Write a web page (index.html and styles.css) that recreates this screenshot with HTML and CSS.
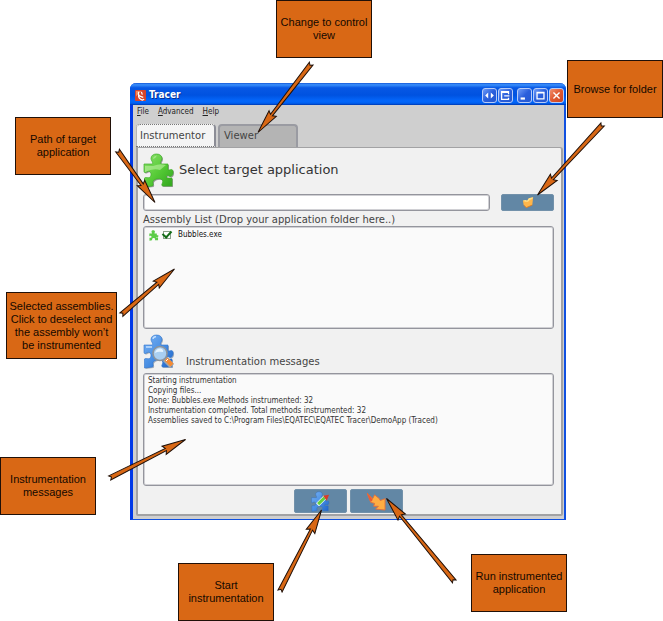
FILE: index.html
```html
<!DOCTYPE html>
<html lang="en">
<head>
<meta charset="utf-8">
<title>Tracer</title>
<link rel="stylesheet" href="styles.css">
</head>
<body>
<svg class="defs" aria-hidden="true">
  <defs>
    <linearGradient id="green" x1="0" y1="0" x2="1" y2="1"><stop offset="0" stop-color="#8fe070"/><stop offset=".5" stop-color="#58cc38"/><stop offset="1" stop-color="#2fa41c"/></linearGradient>
    <linearGradient id="blue" x1="0" y1="0" x2="1" y2="1"><stop offset="0" stop-color="#79b2f4"/><stop offset=".5" stop-color="#4a90e4"/><stop offset="1" stop-color="#1c62c8"/></linearGradient>
    <path id="piece" d="M1 11 H9 C11 10.500 8 7.500 8 5.500 C8 2.500 10.500 1 13.500 1 C17 1 19 3 19 5.500 C19 7.500 16.500 9.500 18 11 L25 11 V16 C25 18.500 28 15.500 29.500 17 C31 19 29.500 24 27 23.500 C25.500 23 24 21.500 23.500 23 V25 H29 V33 H19.500 C17.500 32 20.500 29.500 19.500 27.500 C18 24.500 11 25.500 10 28.500 C9.500 30.500 11 31.500 9.500 33 L1.500 34 V25 C2.500 23.500 6 26 7.500 23.500 C9 20.500 7 17.500 4.500 18.500 C2.500 19.500 1 20.500 1 18 Z"/>
  </defs>
</svg>
<div class="stage">
  <main class="window">
    <header class="titlebar">
      <svg class="app-icon" viewBox="0 0 12 12" aria-hidden="true"><rect width="12" height="12" rx="1" fill="#d8442a"/><path d="M1 1H7L1 7Z" fill="#f28a5c"/><path d="M4 2Q3 6 6 7L9 8M4 5Q3 9 8 11L10 10M7 2L8 5" fill="none" stroke="#fff" stroke-width="1.300"/></svg>
      <h1>Tracer</h1>
      <div class="controls">
        <button aria-label="Switch"><svg viewBox="0 0 15 15"><path d="M6 4V11L2.500 7.500ZM9 4V11L12.500 7.500Z" fill="#fff"/></svg></button>
        <button aria-label="Detach"><svg viewBox="0 0 15 15"><path d="M11 6V3H3V12H11V10M3 4H11M6 8H12" fill="none" stroke="#fff" stroke-width="1.500"/></svg></button>
      </div>
      <div class="controls sys">
        <button aria-label="Minimize"><svg viewBox="0 0 15 15"><path d="M3 11H8" stroke="#fff" stroke-width="2.500"/></svg></button>
        <button aria-label="Maximize"><svg viewBox="0 0 15 15"><path d="M3.500 4H11.500V11.500H3.500ZM3 4.500H12" fill="none" stroke="#fff" stroke-width="1.500"/></svg></button>
        <button class="close" aria-label="Close"><svg viewBox="0 0 15 15"><path d="M4 4L11 11M11 4L4 11" stroke="#fff" stroke-width="1.600"/></svg></button>
      </div>
    </header>
    <nav class="menu"><a href="#"><u>F</u>ile</a><a href="#"><u>A</u>dvanced</a><a href="#"><u>H</u>elp</a></nav>
    <div class="tabs" role="tablist">
      <button class="tab active" role="tab" aria-selected="true">Instrumentor</button>
      <button class="tab" role="tab" aria-selected="false">Viewer</button>
    </div>
    <section class="panel">
      <div class="head">
        <svg class="piece" viewBox="0 0 32 35" aria-hidden="true"><use href="#piece" x="1" y="1" fill="#9a9a9a"/><use href="#piece" fill="url(#green)" stroke="#3fae2a" stroke-width=".7"/><path d="M10 6Q10 3 14 2.500Q13 5 10 6M2 13H10Q17 10 23 12L17 17Q10 15 2 19Z" fill="#c4f4ac" opacity=".55"/></svg>
        <h2><label for="path">Select target application</label></h2>
      </div>
      <div class="path-row">
        <input id="path" type="text">
        <button class="action" aria-label="Browse for folder"><svg viewBox="0 0 14 12"><path d="M1 4L4 3 6 4 8 1 13 0 12 9 5 12 2 9Z" fill="#ffb64a"/><path d="M1 4L4 3 6 4 8 1 13 0 12 2 9 3 7 5 4 5Z" fill="#ffe08a"/><path d="M2 9L5 12 12 9" fill="none" stroke="#d87820"/></svg></button>
      </div>
      <h3 class="list-title">Assembly List (Drop your application folder here..)</h3>
      <div class="box list">
        <div class="item">
          <svg viewBox="0 0 32 35" aria-hidden="true"><use href="#piece" fill="#5ccc48"/></svg>
          <input id="bubbles" type="checkbox" checked>
          <label for="bubbles">Bubbles.exe</label>
        </div>
      </div>
      <div class="head messages-head">
        <svg class="piece" viewBox="0 0 32 35" aria-hidden="true"><use href="#piece" x="1" y="1" fill="#a8b0ba"/><use href="#piece" fill="url(#blue)" stroke="#2f74cc" stroke-width=".6"/><path d="M10 5Q10 3 13 2.500M3 13H9" fill="none" stroke="#c4e0ff" stroke-width="1.300"/><path d="M22 25L29 32" stroke="#a6a6a6" stroke-width="6"/><path d="M23 25L29 31" stroke="#f58a32" stroke-width="4"/><path d="M23 27L25 25" stroke="#fff" stroke-width="1"/><circle cx="17" cy="19.500" r="7" fill="#a9cff2" stroke="#8d949c" stroke-width="1.600"/><path d="M12 19Q13 14 18 14.500Q21 16 20 18Q15 17 12 19" fill="#e6f4ff"/></svg>
        <h3>Instrumentation messages</h3>
      </div>
      <div class="box log">
        <p>Starting instrumentation</p>
        <p>Copying files...</p>
        <p>Done: Bubbles.exe Methods instrumented: 32</p>
        <p>Instrumentation completed. Total methods instrumented: 32</p>
        <p>Assemblies saved to C:\Program Files\EQATEC\EQATEC Tracer\DemoApp (Traced)</p>
      </div>
      <div class="actions">
        <button class="action" aria-label="Start instrumentation"><svg viewBox="0 0 32 35"><use href="#piece" fill="url(#blue)" stroke="#2869c0" stroke-width=".6"/><path d="M11 23L24 10" stroke="#fff" stroke-width="7"/><path d="M12 22L23 11" stroke="#62d040" stroke-width="5"/><path d="M23 9L28 8 26 13Z" fill="#d83c26" stroke="#d83c26" stroke-width="3"/></svg></button>
        <button class="action" aria-label="Run instrumented application"><svg viewBox="0 0 20 20"><path d="M0 1L6 7 8 3 13 7 14 9 19 7V19L9 18 12 15 7 15 8 12 4 11Z" fill="#ffad42" stroke="#e0703c" stroke-width="1"/><path d="M0 1L6 8 5 10 3 9Z" fill="#e85a38"/></svg></button>
      </div>
    </section>
  </main>

  <aside class="note note-view">Change to control view</aside>
  <aside class="note note-path">Path of target application</aside>
  <aside class="note note-browse">Browse for folder</aside>
  <aside class="note note-selected">Selected assemblies. Click to deselect and the assembly won’t be instrumented</aside>
  <aside class="note note-messages">Instrumentation messages</aside>
  <aside class="note note-start">Start instrumentation</aside>
  <aside class="note note-run">Run instrumented application</aside>

  <svg class="arrows" width="663" height="621" viewBox="0 0 663 621" aria-hidden="true">
    <path transform="translate(258 132.500) rotate(-52.300)" d="M0 0L24-4.600 22-1.200 87-2.300 85 0 87 2.300 22 1.200 24 4.600Z"/>
    <path transform="translate(155 202.500) rotate(-125.800)" d="M0 0L24-4.600 22-1.400 64-2.300 62 0 64 2.300 22 1.400 24 4.600Z"/>
    <path transform="translate(537.500 195) rotate(-47.300)" d="M0 0L24-4.600 22-1.200 96-2.300 94 0 96 2.300 22 1.200 24 4.600Z"/>
    <path transform="translate(174.500 269) rotate(139.400)" d="M0 0L24-4.600 22-1.400 70-2.300 68 0 70 2.300 22 1.400 24 4.600Z"/>
    <path transform="translate(185.500 439.500) rotate(153.100)" d="M0 0L24-4.600 22-1.200 85-2.300 83 0 85 2.300 22 1.200 24 4.600Z"/>
    <path transform="translate(321.500 510) rotate(117.100)" d="M0 0L24-4.800 22-1.200 91-2.300 89 0 91 2.300 22 1.200 24 4.800Z"/>
    <path transform="translate(386.500 498.500) rotate(50.700)" d="M0 0L24-4.800 22-1.200 107-2.300 105 0 107 2.300 22 1.200 24 4.800Z"/>
  </svg>
</div>
</body>
</html>
```
FILE: styles.css
```css
* { box-sizing: border-box; }
body { margin: 0; background: #fff; }
h1, h2, h3, p { margin: 0; font-weight: normal; }
h3 { font-size: 10px; line-height: 12px; }
button { margin: 0; padding: 0; border: 0; font: inherit; color: inherit; }
.defs { position: absolute; width: 0; height: 0; }

.stage {
  position: relative;
  min-height: 621px;
  padding: 83px 97px 0 130px;
  font-family: "DejaVu Sans", sans-serif;
  font-size: 10px;
  color: #444;
}

.window {
  background: #cfcfcf;
  border: solid #1050e0;
  border-width: 0 2px 1px 3px;
  border-radius: 6px 6px 0 0;
  border-left-color: #0038e8;
  padding-bottom: 3px;
}
.titlebar {
  display: flex;
  align-items: center;
  height: 22px;
  margin: 0 -2px 0 -3px;
  padding: 2px 2px 0 5px;
  border-radius: 6px 6px 0 0;
  background: linear-gradient(#1458d8, #3a90fc 8%, #0858e4 22%, #0052e0 55%, #0468fc 82%, #0060f0 92%, #0038b0);
}
.app-icon { width: 11px; height: 11px; margin-right: 3px; }
.titlebar h1 {
  flex: 1;
  font: bold 10px/16px "DejaVu Sans Condensed", "DejaVu Sans", sans-serif;
  color: #fff;
  text-shadow: 1px 1px #083090;
}
.controls { display: flex; gap: 1px; }
.controls.sys { margin-left: 4px; }
.controls button {
  width: 15px;
  height: 15px;
  border: 1px solid #b8ccf8;
  border-radius: 3px;
  background: linear-gradient(135deg, #6f9cf8, #2a5fdc 50%, #2458d0);
}
.controls svg { display: block; width: 13px; height: 13px; }
.controls .close { background: linear-gradient(135deg, #f09070, #e05830 50%, #cc4420); }

.menu {
  display: flex;
  gap: 9px;
  padding: 1px 4px;
  font: 8px/12px "DejaVu Sans Condensed", "DejaVu Sans", sans-serif;
}
.menu a { color: #222; text-decoration: none; }

.tabs { display: flex; gap: 2px; padding: 5px 3px 0; }
.tab {
  width: 80px;
  height: 23px;
  padding: 0 4px 2px;
  border: 2px solid #9a9ba2;
  border-bottom: 0;
  border-radius: 4px 4px 0 0;
  background: #b4b4b4;
  text-align: left;
}
.tab.active {
  padding: 0 3px;
  border: 1px dotted #777;
  border-right: 2px solid #8c8d96;
  background: #f4f4f4;
}

.panel {
  margin: 0 1px 0 3px;
  padding: 4px 7px 1px 5px;
  border: 2px solid #a2a2a4;
  border-top-width: 1px;
  border-radius: 0 3px 2px 2px;
  background: #f1f1f1;
}
.head { display: flex; align-items: center; gap: 4px; height: 36px; }
.piece { width: 32px; height: 35px; flex: none; }
.head h2 { font-size: 13px; line-height: 18px; color: #333; }

.path-row { display: flex; gap: 11px; margin-top: 6px; }
.path-row input {
  flex: 1;
  min-width: 0;
  height: 17px;
  border: 1px solid #94959d;
  border-radius: 3px;
  background: #fff;
  box-shadow: inset 0 0 0 1px #d0d0d4;
}
.action {
  display: grid;
  place-items: center;
  width: 53px;
  height: 24px;
  border: 1px solid #7291aa;
  border-radius: 2px;
  background: #6287a5;
}
.path-row .action { height: 17px; }
.path-row svg { width: 12px; height: 11px; }

.list-title { margin-top: 3px; }
.box {
  border: 1px solid #94959d;
  border-radius: 3px;
  background: #fafafa;
  box-shadow: inset 0 0 0 1px #d0d0d4;
  font: 8px/10px "DejaVu Sans Condensed", "DejaVu Sans", sans-serif;
  color: #333;
}
.list { height: 103px; padding: 2px 5px; }
.item { display: flex; align-items: center; height: 12px; color: #111; }
.item svg { width: 10px; height: 11px; }
.item input {
  appearance: none;
  display: grid;
  place-items: center;
  width: 8px;
  height: 8px;
  margin: 0 7px 0 4px;
  border: 1px solid #8aa08a;
  background: #fff;
}
.item input:checked::after {
  content: "";
  width: 4px;
  height: 7px;
  margin-top: -4px;
  border: solid #146c18;
  border-width: 0 2px 2px 0;
  transform: rotate(42deg);
}
.messages-head { gap: 11px; height: 36px; margin-top: 4px; }
.messages-head h3 { align-self: flex-end; margin-bottom: 1px; }
.log { height: 113px; margin-top: 4px; padding: 2px 4px; }
.log p { white-space: nowrap; }

.actions { display: flex; justify-content: center; gap: 3px; margin-top: 3px; }
.actions svg { width: 19px; height: 21px; }

/* Annotations lie on a free canvas above the window. */
.note {
  position: absolute;
  display: flex;
  align-items: center;
  justify-content: center;
  width: 96px;
  height: 58px;
  border: 1px solid #201008;
  background: #d96815;
  font: 11px/13px "Liberation Sans", Arial, sans-serif;
  color: #140800;
  text-align: center;
}
.note-view { left: 276px; top: 0; }
.note-path { left: 15px; top: 117px; }
.note-browse { left: 567px; top: 60px; }
.note-selected { left: 6px; top: 292px; width: 111px; height: 67px; padding: 0 2px; }
.note-messages { left: 0; top: 457px; }
.note-start { left: 178px; top: 563px; }
.note-run { left: 471px; top: 554px; }

.arrows { position: absolute; left: 0; top: 0; pointer-events: none; }
.arrows path { fill: #d96815; stroke: #201008; stroke-width: 1; }
```
